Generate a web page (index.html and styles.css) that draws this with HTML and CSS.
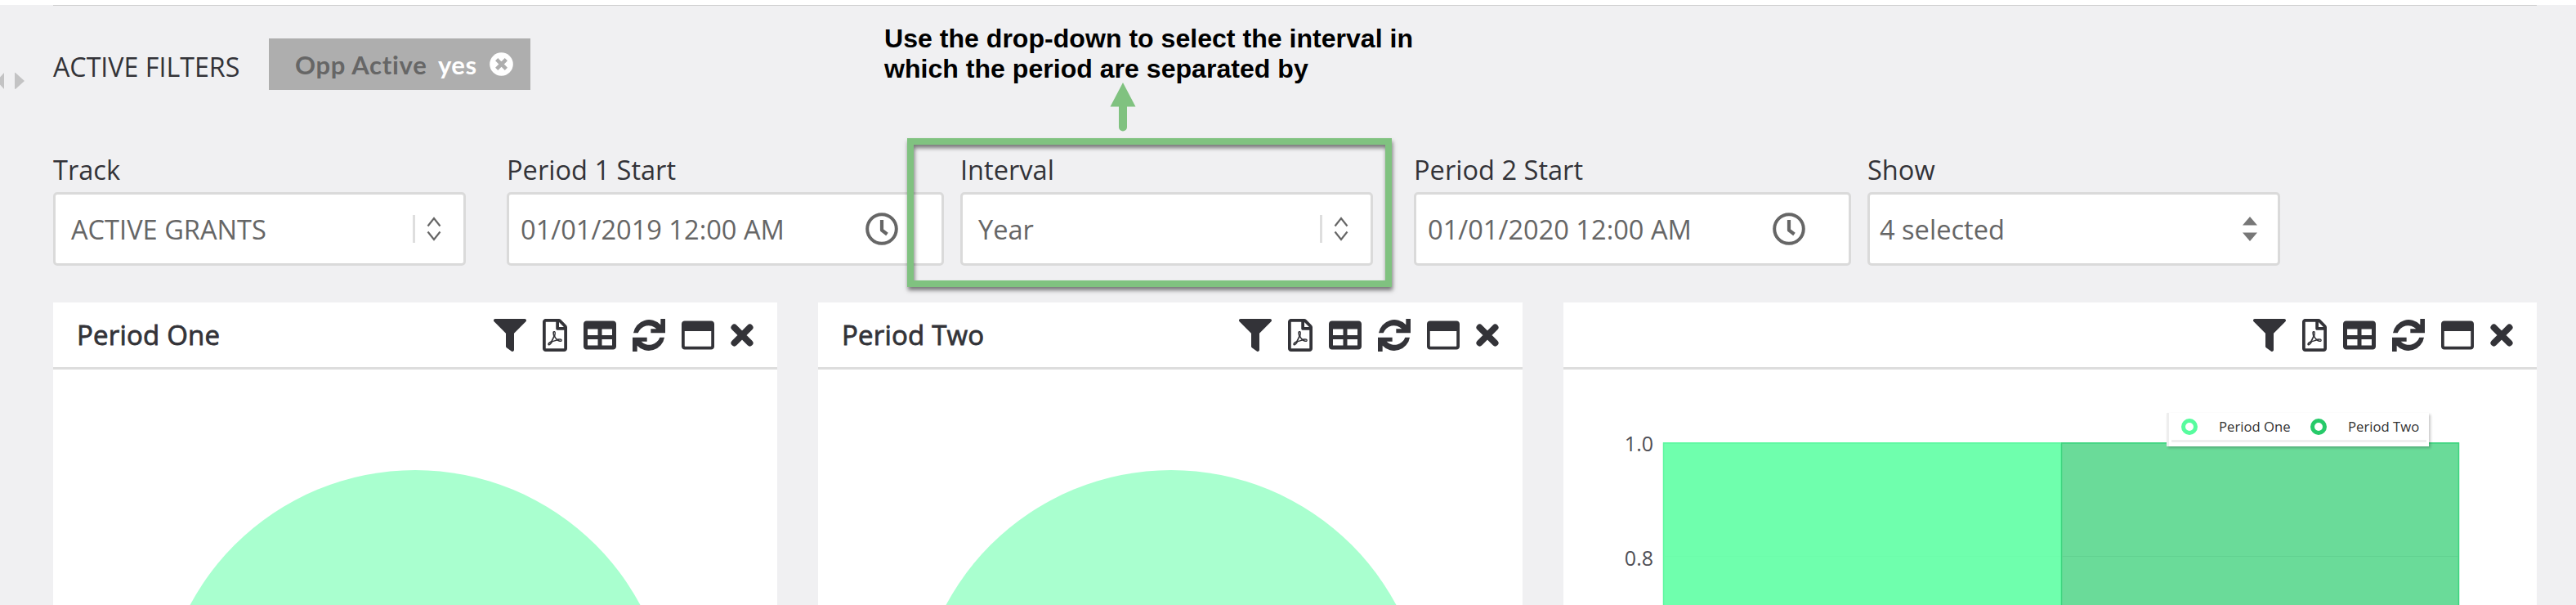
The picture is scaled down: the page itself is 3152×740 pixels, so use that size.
FILE: index.html
```html
<!DOCTYPE html>
<html lang="en">
<head>
<meta charset="utf-8">
<title>Grants dashboard</title>
<link rel="stylesheet" href="styles.css">
</head>
<body>
<svg class="sprite" aria-hidden="true">
  <symbol id="filter" viewBox="0 0 512 512"><path d="M487.976 0H24.028C2.71 0-8.047 25.866 7.058 40.971L192 225.941V432c0 7.831 3.821 15.17 10.237 19.662l80 55.98C298.02 518.69 320 507.493 320 487.98V225.941l184.947-184.97C520.021 25.896 509.338 0 487.976 0z"/></symbol>
  <symbol id="pdf" viewBox="0 0 384 512"><path d="M369.9 97.9L286 14C277 5 264.8-.1 252.1-.1H48C21.5 0 0 21.5 0 48v416c0 26.5 21.5 48 48 48h288c26.5 0 48-21.5 48-48V131.9c0-12.7-5.1-25-14.1-34zM332.1 128H256V51.9l76.1 76.1zM48 464V48h160v104c0 13.3 10.7 24 24 24h104v288H48zm250.2-143.7c-12.2-12-47-8.7-64.4-6.5-17.2-10.5-28.7-25-36.8-46.3 3.9-16.1 10.1-40.6 5.4-56-4.2-26.2-37.8-23.6-42.6-5.9-4.4 16.1-.4 38.5 7 67.1-10 23.9-24.9 56-35.4 74.4-20 10.3-47 26.2-51 46.2-3.3 15.8 26 55.2 76.1-31.2 22.4-7.4 46.8-16.5 68.4-20.1 18.9 10.2 41 17 55.8 17 25.5 0 28-28.2 17.5-38.7zm-198.1 77.8c5.1-13.7 24.5-29.5 30.4-35-19 30.3-30.4 35.7-30.4 35zm81.6-190.6c7.4 0 6.7 32.1 1.8 40.8-4.4-13.9-4.3-40.8-1.8-40.8zm-24.4 136.6c9.7-16.9 18-37 24.7-54.7 8.3 15.1 18.9 27.2 30.1 35.5-20.8 4.3-38.9 13.1-54.8 19.2zm131.6-5s-5 6-37.3-7.8c35.1-2.6 40.9 5.4 37.3 7.8z"/></symbol>
  <symbol id="table" viewBox="0 0 512 512"><path d="M464 32H48C21.49 32 0 53.49 0 80v352c0 26.51 21.49 48 48 48h416c26.51 0 48-21.49 48-48V80c0-26.51-21.49-48-48-48zM224 416H64v-96h160v96zm0-160H64v-96h160v96zm224 160H288v-96h160v96zm0-160H288v-96h160v96z"/></symbol>
  <symbol id="sync" viewBox="0 0 120 120"><path d="M3 52A58 58 0 0 1 103 22V0H120V52H67V37H88A41 41 0 0 0 20 52Z"/><path d="M117 68A58 58 0 0 1 17 98V120H0V68H53V83H32A41 41 0 0 0 100 68Z"/></symbol>
  <symbol id="window" viewBox="0 0 512 512"><path d="M464 32H48C21.5 32 0 53.5 0 80v352c0 26.500 21.500 48 48 48h416c26.500 0 48-21.500 48-48V80c0-26.500-21.500-48-48-48zm0 394c0 3.300-2.700 6-6 6H54c-3.300 0-6-2.700-6-6V192h416v234z"/></symbol>
  <symbol id="close" viewBox="0 0 28 40"><path d="M4.500 10.500L23.500 29.500M23.500 10.500L4.500 29.500" stroke="currentColor" stroke-width="8" stroke-linecap="round"/></symbol>
  <symbol id="clock" viewBox="0 0 40 40"><circle cx="20" cy="20" r="17.800" fill="none" stroke="currentColor" stroke-width="4"/><path d="M20 9V21.500L26.500 26.500" fill="none" stroke="currentColor" stroke-width="4.200" stroke-linejoin="round"/></symbol>
  <symbol id="chevrons" viewBox="0 0 18 30"><path d="M1.500 11.500L9 2L16.500 11.500M1.500 18.500L9 28L16.500 18.500" fill="none" stroke="currentColor" stroke-width="2.200"/></symbol>
</svg>

<div class="topbar"></div>
<svg class="splitter" viewBox="0 0 32 22"><path d="M5 1V21L-4 11ZM18 1Q18 0 20 2L30 11L20 20Q18 22 18 20Z"/></svg>

<section class="filters">
  <span class="filters-title">ACTIVE FILTERS</span>
  <div class="chip">
    <span class="chip-name">Opp Active</span>
    <span class="chip-value">yes</span>
    <svg class="chip-close" viewBox="0 0 29 29"><circle cx="14.500" cy="14.500" r="14.300" fill="#fff"/><path d="M10.300 10.300L18.700 18.700M18.700 10.300L10.300 18.700" stroke="#aeaeae" stroke-width="4.600" stroke-linecap="square"/></svg>
  </div>
</section>

<section class="fields">
  <div class="field">
    <label>Track</label>
    <div class="control select"><span>ACTIVE GRANTS</span><i class="divider"></i><svg class="chev"><use href="#chevrons"/></svg></div>
  </div>
  <div class="field">
    <label>Period 1 Start</label>
    <div class="control date"><span>01/01/2019 12:00 AM</span><svg class="clock"><use href="#clock"/></svg></div>
  </div>
  <div class="field">
    <label>Interval</label>
    <div class="control select"><span>Year</span><i class="divider"></i><svg class="chev"><use href="#chevrons"/></svg></div>
  </div>
  <div class="field">
    <label>Period 2 Start</label>
    <div class="control date"><span>01/01/2020 12:00 AM</span><svg class="clock"><use href="#clock"/></svg></div>
  </div>
  <div class="field">
    <label>Show</label>
    <div class="control multi"><span>4 selected</span><svg class="sort" viewBox="0 0 18 30"><path d="M0 10.500L9 0L18 10.500ZM0 19.500H18L9 30Z"/></svg></div>
  </div>
</section>

<section class="widgets">
  <article class="widget">
    <header><h2>Period One</h2>
      <div class="tools"><svg><use href="#filter"/></svg><svg class="w30"><use href="#pdf"/></svg><svg><use href="#table"/></svg><svg><use href="#sync"/></svg><svg><use href="#window"/></svg><svg class="w28"><use href="#close"/></svg></div>
    </header>
    <svg class="chart" viewBox="0 0 886 288"><circle cx="443" cy="435.500" r="312.500" fill="#a9ffcf"/></svg>
  </article>
  <article class="widget">
    <header><h2>Period Two</h2>
      <div class="tools"><svg><use href="#filter"/></svg><svg class="w30"><use href="#pdf"/></svg><svg><use href="#table"/></svg><svg><use href="#sync"/></svg><svg><use href="#window"/></svg><svg class="w28"><use href="#close"/></svg></div>
    </header>
    <svg class="chart" viewBox="0 0 862 288"><circle cx="432" cy="435.500" r="312.500" fill="#a9ffcf"/></svg>
  </article>
  <article class="widget">
    <header><h2></h2>
      <div class="tools"><svg><use href="#filter"/></svg><svg class="w30"><use href="#pdf"/></svg><svg><use href="#table"/></svg><svg><use href="#sync"/></svg><svg><use href="#window"/></svg><svg class="w28"><use href="#close"/></svg></div>
    </header>
    <svg class="chart" viewBox="0 0 1191 288">
      <rect x="122" y="89" width="487" height="199" fill="#6fffad"/>
      <path d="M122.500 288V90H608" fill="none" stroke="#5df7a0" stroke-width="1.500"/>
      <rect x="609" y="89" width="487" height="199" fill="#6adb99"/>
      <path d="M609.500 288V90H1095.500V288" fill="none" stroke="#3dd57f" stroke-width="1.500"/>
      <path d="M610 228.500H1095" stroke="#62d191"/>
      <path d="M123 228.500H608" stroke="#6cfcaa"/>
      <text class="axis" x="110" y="100" text-anchor="end">1.0</text>
      <text class="axis" x="110" y="240" text-anchor="end">0.8</text>
    </svg>
    <div class="legend">
      <i class="ring one"></i><span>Period One</span><i class="ring two"></i><span>Period Two</span>
    </div>
  </article>
</section>

<p class="note">Use the drop-down to select the interval in<br>which the period are separated by</p>
<svg class="arrow" viewBox="0 0 32 60"><path d="M16 0L31.500 29.500H21V54.500A5 5 0 0 1 11 54.500V29.500H.500Z"/></svg>
<div class="highlight"></div>
</body>
</html>
```

FILE: styles.css
```css
* { box-sizing: border-box; }
body {
  position: relative;
  width: 3152px;
  height: 740px;
  margin: 0;
  overflow: hidden;
  background: #f0f0f2;
  color: #333338;
  font-family: "Open Sans", "Noto Sans", sans-serif;
  font-size: 32.6px;
}
.sprite { position: absolute; width: 0; height: 0; }
svg { display: block; flex: none; fill: currentColor; }

.topbar { height: 7px; background: linear-gradient(#ccc, #ccc) 65px 6px / 3039px 1px no-repeat, linear-gradient(#fff, #fff) 0 0 / 100% 6px no-repeat; }
.splitter { position: absolute; left: 0; top: 88px; width: 32px; height: 22px; color: #c3c3c4; }

.filters { display: flex; align-items: flex-start; height: 181px; padding: 40px 0 0 65px; }
.filters-title { width: 264px; font-size: 32.2px; line-height: 46px; padding-top: 12px; white-space: nowrap; }
.chip {
  display: flex;
  align-items: center;
  width: 320px;
  height: 63px;
  padding-left: 32px;
  background: #aeaeae;
  font: 700 31px/40px Lato, sans-serif;
  color: #fff;
}
.chip-name { width: 175px; color: #666; letter-spacing: .7px; }
.chip-value { width: 63px; letter-spacing: .5px; }
.chip-close { width: 29px; height: 29px; }

.fields { display: flex; height: 182px; padding-left: 65px; }
.field { width: 555px; flex: none; }
.field label { display: block; height: 47px; line-height: 40px; white-space: nowrap; }
.control {
  display: flex;
  align-items: center;
  width: 505px;
  height: 90px;
  border: 3px solid #dadada;
  border-radius: 5px;
  background: #fff;
  color: #666;
  white-space: nowrap;
}
.control span { flex: 1; }
.select { padding: 0 27px 0 19px; }
.divider { width: 3px; height: 34px; margin-right: 14px; background: #dedede; }
.chev { width: 18px; height: 30px; }
.date { width: 535px; padding: 0 53px 0 14px; }
.clock { width: 40px; height: 40px; }
.multi { padding: 0 25px 0 12px; }
.sort { width: 18px; height: 30px; color: #777; }

.widgets { display: grid; grid-template-columns: 886px 862px 1191px; column-gap: 50px; padding-left: 65px; }
.widget { position: relative; height: 370px; background: #fff; }
.widget header { display: flex; justify-content: space-between; align-items: center; height: 82px; padding: 0 29px; border-bottom: 3px solid #ddd; }
.widget h2 { margin: 0; font-size: 33px; font-weight: 400; line-height: 44px; letter-spacing: .2px; -webkit-text-stroke: .8px currentColor; }
.tools { display: flex; gap: 20px; }
.tools svg { width: 40px; height: 40px; }
.tools .w30 { width: 30px; }
.tools .w28 { width: 28px; }
.chart { width: 100%; height: 288px; }
.axis { font-size: 25px; fill: #4e4e55; }

.legend {
  position: absolute;
  left: 738px;
  top: 135px;
  display: flex;
  align-items: center;
  width: 321px;
  height: 41px;
  padding: 0 0 8px 15px;
  border-left: 3px solid #eee;
  background: linear-gradient(#eee, #eee) 3px 33px / 312px 3px no-repeat, #fff;
  box-shadow: 2px 2px 3px rgba(0, 0, 0, .22);
  font-size: 16.7px;
  color: #333;
  white-space: nowrap;
}
.ring { width: 20px; height: 20px; margin-right: 26px; border: 5px solid #57fc9e; border-radius: 50%; }
.ring.two { border-color: #26ca69; }
.legend span { width: 112px; }
.legend span:last-child { width: auto; }

.note { position: absolute; left: 1082px; top: 29px; margin: 0; font: 700 32.1px/37px "Liberation Sans", Arial, sans-serif; color: #000; white-space: nowrap; }
.arrow { position: absolute; left: 1358px; top: 101px; width: 32px; height: 60px; color: #80c280; }
.highlight {
  position: absolute;
  left: 1110px;
  top: 169px;
  width: 593px;
  height: 182px;
  border: 8px solid #80c280;
  box-shadow: 1px 4px 5px rgba(0, 0, 0, .5), inset 1px 4px 5px rgba(0, 0, 0, .5);
}
```
